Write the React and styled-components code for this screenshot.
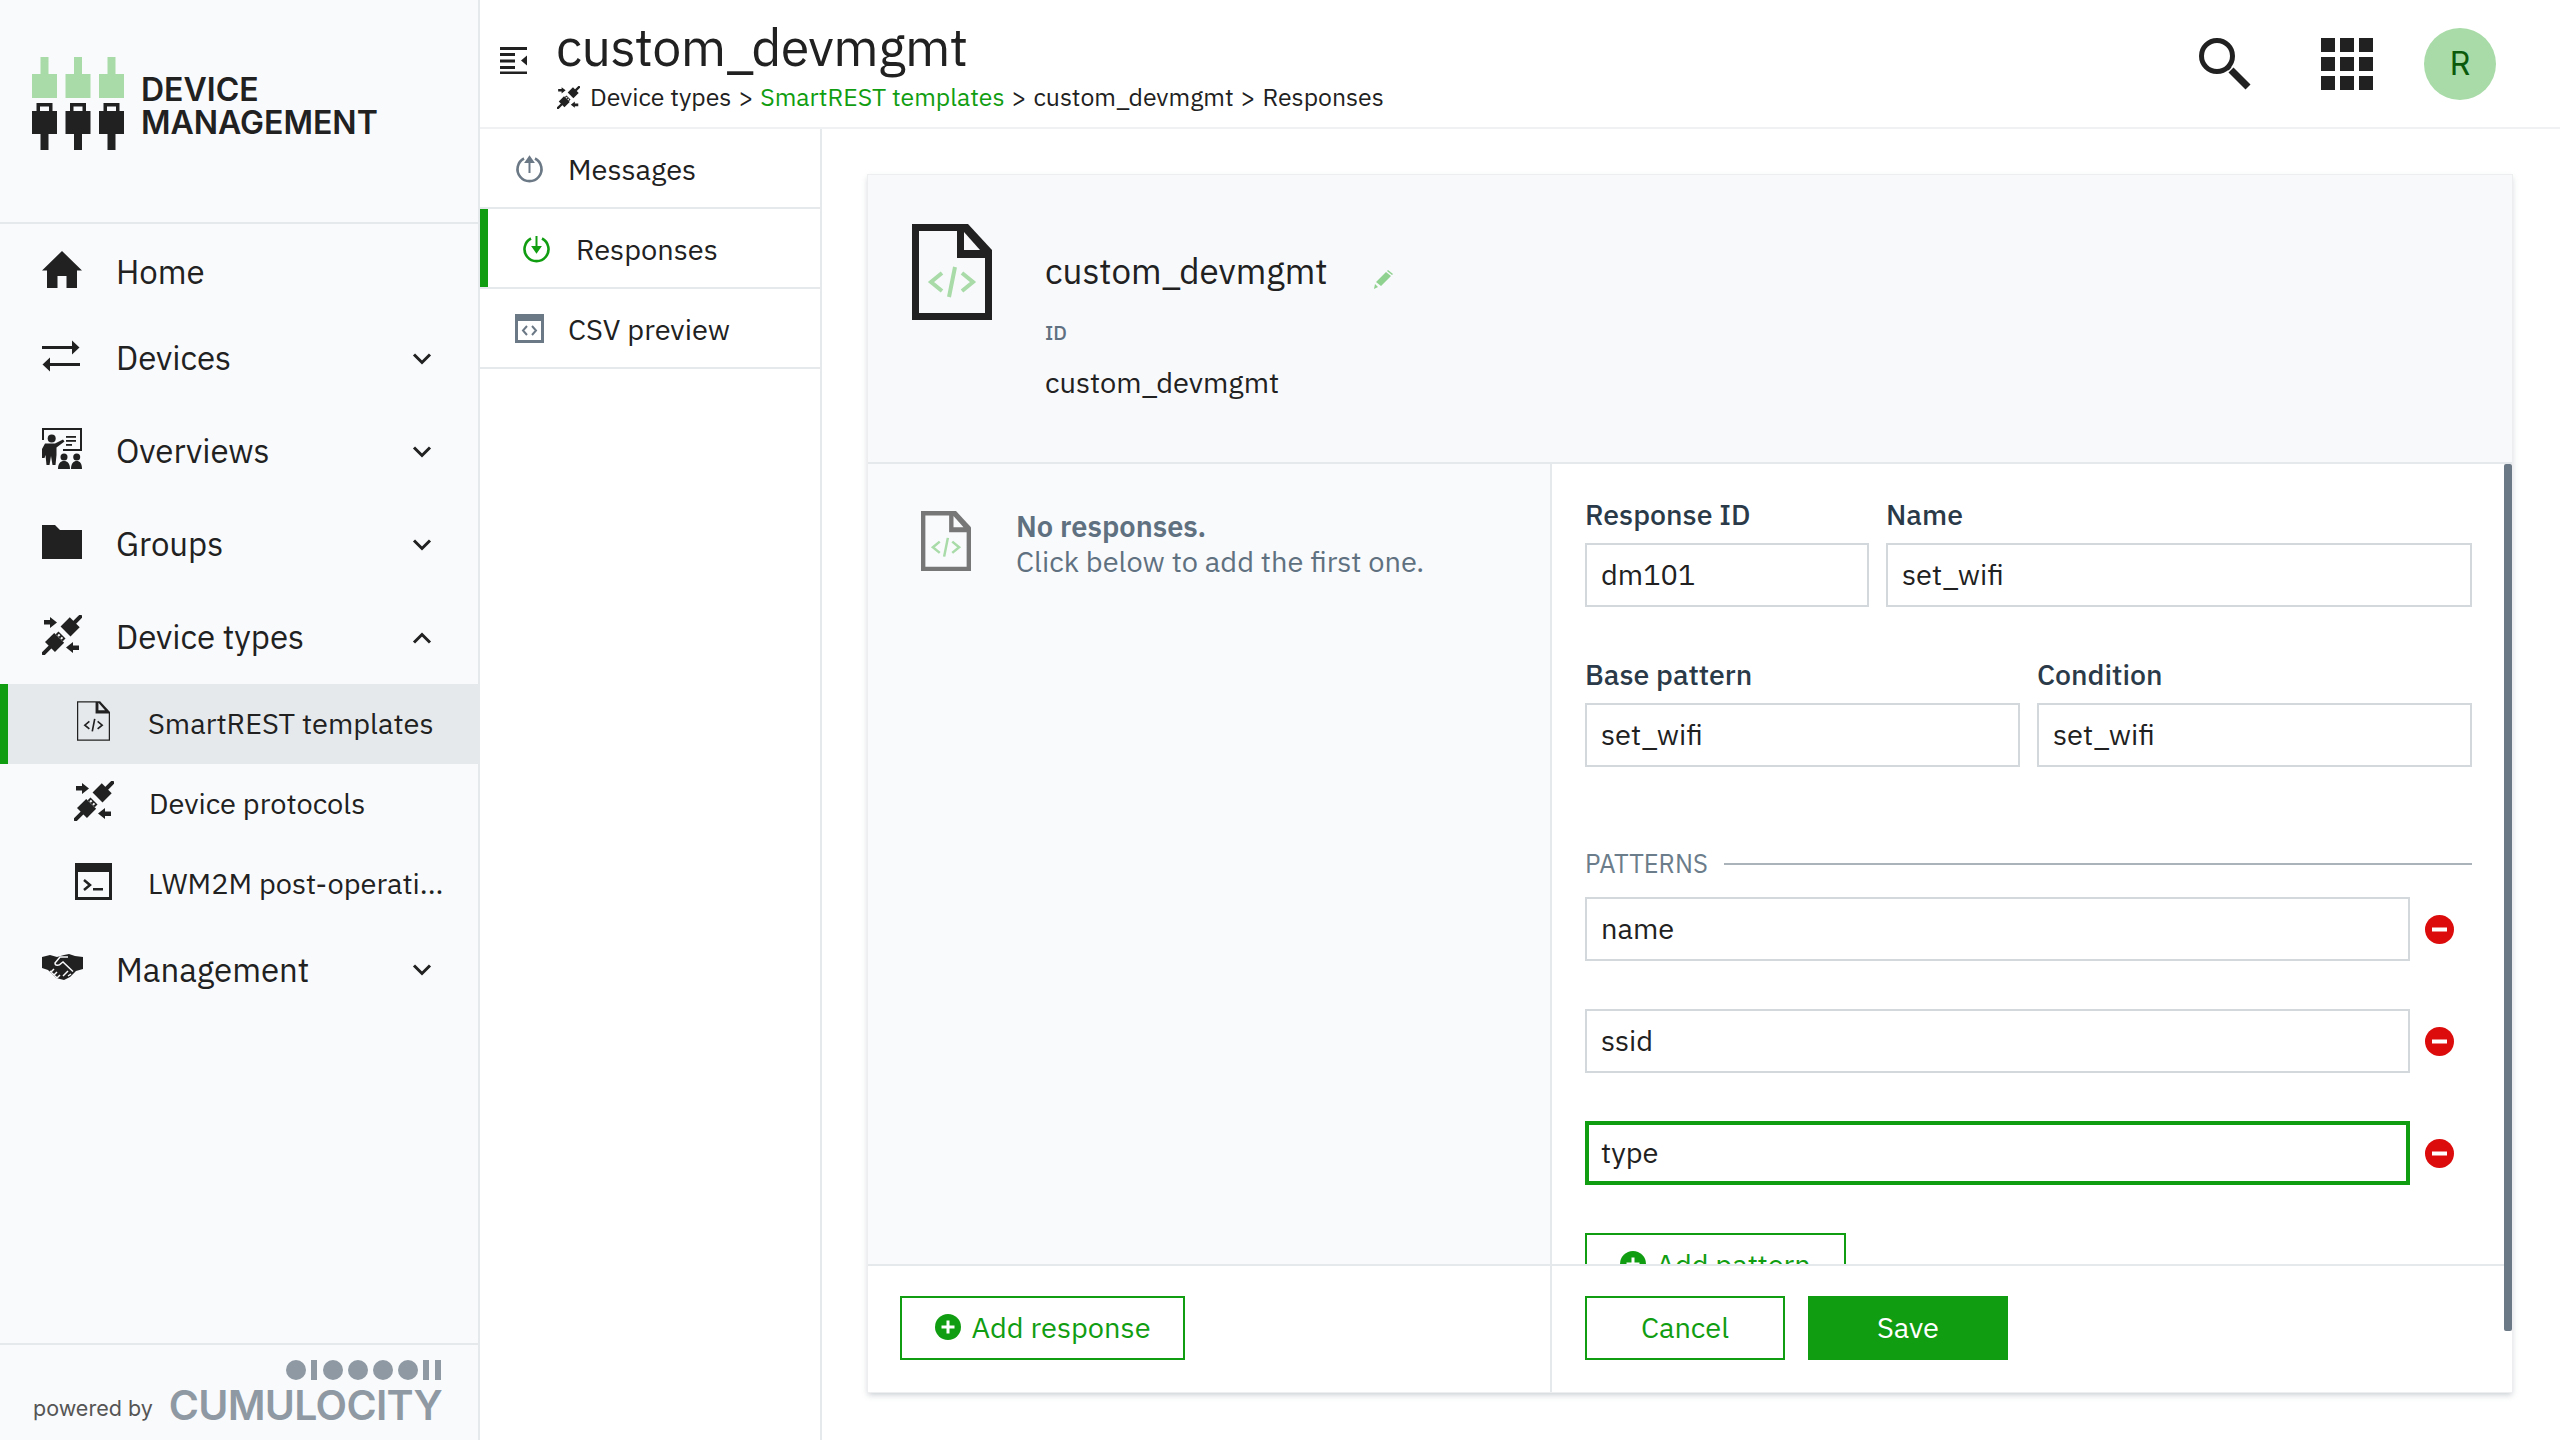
import React from "react";
import styled, { createGlobalStyle } from "styled-components";

const FONT = `"IBM Plex Sans", "Open Sans", "Noto Sans", sans-serif`;
const GREEN = "#119d11";
const INK = "#212121";
const LINE = "#e6e9ec";

const Global = createGlobalStyle`
  html, body { margin: 0; padding: 0; background: #fff; }
  body { font-family: ${FONT}; color: ${INK}; overflow: hidden; }
  * { box-sizing: border-box; }
`;

const Page = styled.div`
  display: flex;
  width: 2560px;
  height: 1440px;
  overflow: hidden;
`;

/* ---------- sidebar ---------- */
const Sidebar = styled.aside`
  flex: 0 0 480px;
  display: flex;
  flex-direction: column;
  background: #f9fafc;
  border-right: 2px solid ${LINE};
`;
const Brand = styled.div`
  flex: 0 0 224px;
  display: flex;
  align-items: flex-start;
  padding: 57px 0 0 32px;
  border-bottom: 2px solid ${LINE};
`;
const BrandName = styled.div`
  margin: 17px 0 0 16px;
  font: 600 32px/32.5px Inter, sans-serif;
  color: ${INK};
`;
const Nav = styled.nav`
  flex: 1;
  padding-top: 8px;
`;
const NavRow = styled.div`
  display: flex;
  align-items: center;
  height: ${(p) => p.$h || 93}px;
  padding: 0 46px 0 42px;
  font: 400 33px/40px ${FONT};
  color: ${INK};
`;
const NavIcon = styled.span`
  flex: 0 0 74px;
  display: flex;
  margin-top: -6px;
`;
const NavLabel = styled.span`
  flex: 1;
  margin-top: -1px;
`;
const SubRow = styled.div`
  display: flex;
  align-items: center;
  height: 80px;
  padding-left: 74px;
  font: 400 29px/36px ${FONT};
  background: ${(p) => (p.$active ? "#e6e9ec" : "transparent")};
  box-shadow: ${(p) => (p.$active ? `inset 8px 0 0 ${GREEN}` : "none")};
`;
const SubIcon = styled.span`
  flex: 0 0 74px;
  display: flex;
  justify-content: center;
  padding-right: 36px;
  margin-top: -6px;
`;
const SubLabel = styled.span`
  margin: -3px 0 0 ${(p) => p.$shift || 0}px;
`;
const SideFoot = styled.div`
  flex: 0 0 97px;
  display: flex;
  align-items: flex-end;
  justify-content: space-between;
  padding: 0 36px 20px 33px;
  border-top: 2px solid ${LINE};
`;
const Powered = styled.span`
  margin-bottom: -1px;
  font: 400 21.500px/26px Inter, sans-serif;
  color: #555;
`;
const CumuBlock = styled.div`
  display: flex;
  flex-direction: column;
  align-items: flex-end;
  gap: 10px;
`;
const CumuWord = styled.span`
  font: 600 41px/30px Inter, sans-serif;
  letter-spacing: -0.700px;
  color: #8e99a3;
`;

/* ---------- main ---------- */
const Main = styled.div`
  flex: 1;
  min-width: 0;
  display: flex;
  flex-direction: column;
`;
const Header = styled.header`
  flex: 0 0 129px;
  display: flex;
  align-items: flex-start;
  padding: 0 64px 0 20px;
  border-bottom: 2px solid #f0f1f2;
`;
const Toggle = styled.span`
  margin: 47px 30px 0 0;
  display: flex;
`;
const TitleBlock = styled.div`
  flex: 1;
  padding-top: 16px;
`;
const Title = styled.h1`
  margin: 0 0 0 -1px;
  font: 400 52px/62px ${FONT};
  letter-spacing: -0.600px;
  color: ${INK};
`;
const Crumbs = styled.div`
  display: flex;
  align-items: center;
  gap: 7px;
  margin-top: 2px;
  font: 400 24.800px/34px ${FONT};
  color: ${INK};
`;
const CrumbIcon = styled.span`
  display: flex;
  margin-right: 3px;
`;
const CrumbLink = styled.span`
  color: ${GREEN};
`;
const Tools = styled.div`
  display: flex;
  align-items: center;
  padding-top: 28px;
`;
const Avatar = styled.div`
  width: 72px;
  height: 72px;
  margin-left: 51px;
  border-radius: 50%;
  background: #a8dba8;
  color: #0b5a0b;
  display: flex;
  align-items: center;
  justify-content: center;
  font: 400 32px/1 Inter, sans-serif;
`;
const GridIcon = styled.div`
  margin-left: 70px;
  display: grid;
  grid-template-columns: repeat(3, 14px);
  grid-auto-rows: 14px;
  gap: 5px;
`;
const GridDot = styled.i`
  background: ${INK};
`;

const Content = styled.div`
  flex: 1;
  min-height: 0;
  display: flex;
`;
const SubMenu = styled.div`
  flex: 0 0 342px;
  border-right: 2px solid ${LINE};
`;
const SubMenuRow = styled.div`
  display: flex;
  align-items: center;
  height: 80px;
  padding-left: ${(p) => (p.$active ? 42 : 35)}px;
  gap: ${(p) => (p.$active ? 25 : 24)}px;
  border-bottom: 2px solid ${LINE};
  font: 400 29px/36px ${FONT};
  color: ${INK};
  box-shadow: ${(p) => (p.$active ? `inset 8px 0 0 ${GREEN}` : "none")};
`;
const RowLabel = styled.span`
  padding-top: 2px;
`;

const CardWrap = styled.div`
  flex: 1;
  min-width: 0;
  padding: 46px 48px 48px 46px;
`;
const Card = styled.section`
  position: relative;
  height: 100%;
  display: flex;
  flex-direction: column;
  background: #fff;
  box-shadow: 0 0 0 1px #eceef0, 0 3px 6px rgba(80, 95, 110, 0.3);
`;
const CardHead = styled.div`
  flex: 0 0 289px;
  display: flex;
  padding: 49px 0 0 44px;
  background: #f8f9fb;
  border-bottom: 2px solid ${LINE};
`;
const HeadText = styled.div`
  margin-left: 53px;
`;
const HeadTitle = styled.div`
  display: flex;
  align-items: center;
  margin-top: 23px;
  font: 400 35px/48px ${FONT};
`;
const Pencil = styled.span`
  display: flex;
  margin: 18px 0 0 45px;
`;
const HeadLabel = styled.div`
  margin-top: 24px;
  font: 500 20px/28px ${FONT};
  color: #5f7180;
`;
const HeadValue = styled.div`
  margin-top: 17px;
  font: 400 29px/36px ${FONT};
`;

const Split = styled.div`
  display: grid;
  grid-template-columns: 684px 1fr;
  flex: ${(p) => (p.$foot ? "0 0 128px" : "1")};
  min-height: 0;
  ${(p) => (p.$foot ? `border-top: 2px solid ${LINE};` : "")}
`;
const LeftPane = styled.div`
  display: flex;
  align-items: flex-start;
  padding: 47px 0 0 53px;
  background: #f9fafc;
  border-right: 2px solid ${LINE};
`;
const Empty = styled.div`
  margin: -2px 0 0 45px;
  font: 400 29px/35px ${FONT};
  color: #5f7180;
`;
const EmptyStrong = styled.div`
  font-weight: 600;
`;
const RightPane = styled.div`
  overflow: hidden;
  padding: 35px 40px 0 33px;
`;
const Thumb = styled.div`
  position: absolute;
  top: 289px;
  right: 0;
  width: 8px;
  height: 867px;
  background: #6b7885;
  border-radius: 2px;
`;
const FieldGrid = styled.div`
  display: grid;
  grid-template-columns: ${(p) => p.$cols};
  column-gap: 17px;
  margin-bottom: ${(p) => p.$after}px;
`;
const FieldLabel = styled.label`
  display: block;
  margin-bottom: 12px;
  font: 500 28.500px/32px ${FONT};
  color: #2b3a48;
`;
const TextInput = styled.input`
  display: block;
  width: 100%;
  height: 64px;
  padding: 0 14px 3px;
  border: ${(p) => (p.$focus ? `4px solid ${GREEN}` : "2px solid #d3d8dc")};
  ${(p) => (p.$focus ? "padding-left: 12px; padding-bottom: 3px;" : "")}
  outline: none;
  background: #fff;
  font: 400 29px/36px ${FONT};
  color: ${INK};
  border-radius: 0;
`;
const PatternsHead = styled.div`
  display: flex;
  align-items: center;
  gap: 16px;
  height: 32px;
  margin-bottom: 17px;
  font: 400 25.500px/32px ${FONT};
  color: #6b7c8a;
`;
const Rule = styled.span`
  flex: 1;
  height: 2px;
  background: #aab2ba;
`;
const PatternRow = styled.div`
  display: flex;
  align-items: center;
  margin-bottom: ${(p) => p.$after ?? 48}px;
`;
const RemoveBtn = styled.span`
  flex: 0 0 62px;
  display: flex;
  justify-content: center;
  padding-right: 3px;
`;
const Button = styled.button`
  display: inline-flex;
  align-items: center;
  justify-content: center;
  gap: 10px;
  height: 64px;
  width: ${(p) => p.$w}px;
  padding: 0 0 2px ${(p) => p.$pl || 0}px;
  border: 2px solid ${GREEN};
  border-radius: 0;
  background: ${(p) => (p.$primary ? GREEN : "#fff")};
  color: ${(p) => (p.$primary ? "#fff" : GREEN)};
  font: 400 29px/36px ${FONT};
  flex: none;
`;
const FootCell = styled.div`
  display: flex;
  gap: 23px;
  padding: 30px 0 0 ${(p) => p.$pl}px;
  ${(p) => (p.$border ? `border-right: 2px solid ${LINE};` : "")}
`;

/* ---------- icons ---------- */
const Chevron = ({ up }) => (
  <svg width="20" height="12" viewBox="0 0 20 12" fill="none">
    <path d={up ? "M2 10.500 10 2.500l8 8" : "M2 1.500 10 9.500l8-8"} stroke={INK} strokeWidth="3" />
  </svg>
);
const HomeIcon = () => (
  <svg width="40" height="37" viewBox="0 0 40 37" fill={INK}>
    <path d="M20 0 40 19.500h-5V37H24.500V25h-9v12H5V19.500H0z" />
  </svg>
);
const SwapIcon = () => (
  <svg width="38" height="32" viewBox="0 0 38 32" fill={INK}>
    <rect x="0" y="6" width="32" height="3" />
    <path d="M30 0.500 37.500 7.500 30 14.500z" />
    <rect x="6" y="23" width="32" height="3" />
    <path d="M8 17.500 0.500 24.500 8 31.500z" />
  </svg>
);
const OverviewIcon = () => (
  <svg width="40" height="41" viewBox="0 0 40 41" fill={INK}>
    <path d="M0 0h40v23H21v-2h17V2H2v10H0z" />
    <circle cx="9.700" cy="10.500" r="4" />
    <path d="M3 15.500h10l8-4 1.500 2-8 6V27l-1 10h-3l-1.500-9-1.500 9h-3l-1-10-1 3H0v-9z" />
    <rect x="24" y="8" width="10" height="1.800" />
    <rect x="24" y="12" width="10" height="1.800" />
    <rect x="24" y="16" width="6" height="1.800" />
    <circle cx="22" cy="29" r="3.500" />
    <path d="M16 41c0-5.500 2.500-8 6-8s6 2.500 6 8z" />
    <circle cx="34.700" cy="29" r="3.500" />
    <path d="M29 41c0-5.500 2.500-8 5.700-8s5.300 2.500 5.300 8z" />
  </svg>
);
const FolderIcon = () => (
  <svg width="40" height="34" viewBox="0 0 40 34" fill={INK}>
    <path d="M0 0h13l5 5h22v29H0z" />
  </svg>
);
const PlugIcon = ({ size = 40, color = INK, bg = "#f9fafc" }) => (
  <svg width={size} height={size} viewBox="0 0 40 40" fill={color}>
    <path d="M2 5h6V2l7 5.500L8 13V9.500H2z" />
    <path d="M37 35h-6v3l-7-5.500L31 27v3.500h6z" />
    <g transform="rotate(-45 20 20)">
      <rect x="-8" y="18" width="12" height="4" />
      <rect x="3" y="13" width="13" height="14" />
      <rect x="16" y="15" width="4" height="10" />
      <rect x="16.500" y="17" width="2.200" height="2" fill={bg} />
      <rect x="16.500" y="21" width="2.200" height="2" fill={bg} />
      <rect x="25" y="13" width="13" height="14" />
      <rect x="37" y="18" width="11" height="4" />
    </g>
  </svg>
);
const DocCode = ({ w, h, frame = INK, code = "#a8dba8", sw = 7, cs = 4, fold = "#f8f9fb" }) => (
  <svg width={w} height={h} viewBox="0 0 80 96">
    <path d="M0 0h56l24 26v70H0z" fill={frame} />
    <path d={`M${sw} ${sw}H45V${sw + 27}h${35 - sw}V${96 - sw}H${sw}z`} fill={fold} />
    <path d={`M52 ${sw + 1}l16 18H52z`} fill={fold} />
    <path d="M30 49 19 58l11 9M50 49l11 9-11 9M43 43l-6 30" fill="none" stroke={code} strokeWidth={cs} />
  </svg>
);
const TerminalIcon = () => (
  <svg width="37" height="37" viewBox="0 0 37 37" fill={INK}>
    <path fillRule="evenodd" d="M0 0h37v37H0zM3 9v25h31V9z" />
    <path d="M9 17l6 5-6 5" fill="none" stroke={INK} strokeWidth="2.500" />
    <rect x="18" y="25" width="10" height="2.500" />
  </svg>
);
const ShakeIcon = () => (
  <svg width="41" height="27" viewBox="0 0 41 27">
    <path fill={INK} d="M0 3 8 1l7 2 7-2 5-1 6 2 8 1v12l-7 2-6 6-6 3-8-2-8-8-6-2z" />
    <path
      fill="none"
      stroke="#f9fafc"
      strokeWidth="1.500"
      d="M26 3h-8l-5 6c0 3 4 3 6 .5l2-1.500 10 9.500M8 17l7 7M12 15l-3 3M15 18l-3 3M18 21l-3 3M26 17l-5 5M29 20l-3 2"
    />
  </svg>
);
const SearchIcon = () => (
  <svg width="52" height="52" viewBox="0 0 52 52" fill="none">
    <circle cx="18" cy="18" r="15.500" stroke={INK} strokeWidth="5" />
    <path d="M29 29l2 2" stroke={INK} strokeWidth="4" />
    <path d="M32 32 49 49" stroke={INK} strokeWidth="7" />
  </svg>
);
const ToggleIcon = () => (
  <svg width="27" height="27" viewBox="0 0 27 27" fill={INK}>
    <rect width="27" height="3" />
    <rect y="6" width="15" height="3" />
    <rect y="12.500" width="15" height="3" />
    <rect y="19" width="15" height="3" />
    <rect y="24.500" width="27" height="2.500" />
    <path d="M27 8.500V18.500l-6-5z" />
  </svg>
);
const CircleArrow = ({ up, color, size = 29 }) => (
  <svg width={size} height={size} viewBox="0 0 29 29" fill="none">
    <path d="M9 4.500a12 12 0 1 0 11 0" stroke={color} strokeWidth="2.600" />
    {up ? (
      <path d="M14.500 19V3M11 8l3.500-5L18 8z" stroke={color} strokeWidth="2" fill={color} />
    ) : (
      <path d="M14.500 2v14M11 13l3.500 5 3.500-5z" stroke={color} strokeWidth="2" fill={color} />
    )}
  </svg>
);
const CsvIcon = () => (
  <svg width="29" height="29" viewBox="0 0 29 29">
    <path fillRule="evenodd" fill="#6b7885" d="M0 0h29v29H0zM3 7v19h23V7z" />
    <path d="M12 12l-4 4.500 4 4.500M17 12l4 4.500-4 4.500" fill="none" stroke="#6b7885" strokeWidth="2" />
  </svg>
);
const PencilIcon = () => (
  <svg width="20" height="20" viewBox="0 0 20 20" fill="#8fd18f">
    <path d="M13 2l5 4L8 16l-5-4zM15 0l5 4-1 1-5-4z" />
    <path d="M2 14l3 3-4 2z" />
  </svg>
);
const MinusCircle = () => (
  <svg width="29" height="29" viewBox="0 0 29 29">
    <circle cx="14.500" cy="14.500" r="14.500" fill="#dc0c0c" />
    <rect x="7" y="12.500" width="15" height="4" fill="#fff" />
  </svg>
);
const PlusCircle = () => (
  <svg width="26" height="26" viewBox="0 0 26 26">
    <circle cx="13" cy="13" r="13" fill={GREEN} />
    <path d="M13 6.500v13M6.500 13h13" stroke="#fff" strokeWidth="3" />
  </svg>
);
const BrandMark = () => (
  <svg width="93" height="93" viewBox="0 0 93 93">
    {[0, 33.500, 67].map((x) => (
      <g key={x} transform={`translate(${x} 0)`}>
        <path d="M8.500 0h8v17H25v24H0V17h8.500z" fill="#a8dba8" />
        <path
          fillRule="evenodd"
          d="M4.500 46h16v8H25v23h-8.500v16h-8V77H0V54h4.500zM8 49.500V54h9v-4.500z"
          fill={INK}
        />
      </g>
    ))}
  </svg>
);
const CumuDots = () => (
  <svg width="156" height="20" viewBox="0 0 156 20" fill="#8e99a3">
    <circle cx="10" cy="10" r="10" />
    <rect x="25" width="6" height="20" />
    <circle cx="47" cy="10" r="10" />
    <circle cx="72" cy="10" r="10" />
    <circle cx="97" cy="10" r="10" />
    <circle cx="122" cy="10" r="10" />
    <rect x="137" width="6" height="20" />
    <rect x="149" width="6" height="20" />
  </svg>
);

export default function App() {
  return (
    <Page>
      <Global />
      <Sidebar>
        <Brand>
          <BrandMark />
          <BrandName>
            DEVICE
            <br />
            MANAGEMENT
          </BrandName>
        </Brand>
        <Nav>
          <NavRow $h={80}>
            <NavIcon><HomeIcon /></NavIcon>
            <NavLabel>Home</NavLabel>
          </NavRow>
          <NavRow>
            <NavIcon><SwapIcon /></NavIcon>
            <NavLabel>Devices</NavLabel>
            <Chevron />
          </NavRow>
          <NavRow>
            <NavIcon><OverviewIcon /></NavIcon>
            <NavLabel>Overviews</NavLabel>
            <Chevron />
          </NavRow>
          <NavRow>
            <NavIcon><FolderIcon /></NavIcon>
            <NavLabel>Groups</NavLabel>
            <Chevron />
          </NavRow>
          <NavRow>
            <NavIcon><PlugIcon /></NavIcon>
            <NavLabel>Device types</NavLabel>
            <Chevron up />
          </NavRow>
          <SubRow $active>
            <SubIcon><DocCode w={33} h={40} sw={3} cs={4} fold="#e6e9ec" code={INK} /></SubIcon>
            <SubLabel>SmartREST templates</SubLabel>
          </SubRow>
          <SubRow>
            <SubIcon><PlugIcon /></SubIcon>
            <SubLabel $shift={-1}>Device protocols</SubLabel>
          </SubRow>
          <SubRow>
            <SubIcon><TerminalIcon /></SubIcon>
            <SubLabel>LWM2M post-operati...</SubLabel>
          </SubRow>
          <NavRow $h={92}>
            <NavIcon><ShakeIcon /></NavIcon>
            <NavLabel>Management</NavLabel>
            <Chevron />
          </NavRow>
        </Nav>
        <SideFoot>
          <Powered>powered by</Powered>
          <CumuBlock>
            <CumuDots />
            <CumuWord>CUMULOCITY</CumuWord>
          </CumuBlock>
        </SideFoot>
      </Sidebar>

      <Main>
        <Header>
          <Toggle><ToggleIcon /></Toggle>
          <TitleBlock>
            <Title>custom_devmgmt</Title>
            <Crumbs>
              <CrumbIcon><PlugIcon size={23} bg="#fff" /></CrumbIcon>
              <span>Device types</span>
              <span>&gt;</span>
              <CrumbLink>SmartREST templates</CrumbLink>
              <span>&gt;</span>
              <span>custom_devmgmt</span>
              <span>&gt;</span>
              <span>Responses</span>
            </Crumbs>
          </TitleBlock>
          <Tools>
            <SearchIcon />
            <GridIcon>
              {Array.from({ length: 9 }).map((_, i) => (
                <GridDot key={i} />
              ))}
            </GridIcon>
            <Avatar>R</Avatar>
          </Tools>
        </Header>
        <Content>
          <SubMenu>
            <SubMenuRow>
              <CircleArrow up color="#6b7885" />
              <RowLabel>Messages</RowLabel>
            </SubMenuRow>
            <SubMenuRow $active>
              <CircleArrow color={GREEN} />
              <RowLabel>Responses</RowLabel>
            </SubMenuRow>
            <SubMenuRow>
              <CsvIcon />
              <RowLabel>CSV preview</RowLabel>
            </SubMenuRow>
          </SubMenu>
          <CardWrap>
            <Card>
              <CardHead>
                <DocCode w={80} h={96} />
                <HeadText>
                  <HeadTitle>
                    custom_devmgmt
                    <Pencil><PencilIcon /></Pencil>
                  </HeadTitle>
                  <HeadLabel>ID</HeadLabel>
                  <HeadValue>custom_devmgmt</HeadValue>
                </HeadText>
              </CardHead>
              <Split>
                <LeftPane>
                  <DocCode w={50} h={60} frame="#777" sw={7} cs={4} fold="#f9fafc" />
                  <Empty>
                    <EmptyStrong>No responses.</EmptyStrong>
                    Click below to add the first one.
                  </Empty>
                </LeftPane>
                <RightPane>
                  <FieldGrid $cols="284px 1fr" $after={52}>
                    <div>
                      <FieldLabel>Response ID</FieldLabel>
                      <TextInput readOnly value="dm101" />
                    </div>
                    <div>
                      <FieldLabel>Name</FieldLabel>
                      <TextInput readOnly value="set_wifi" />
                    </div>
                  </FieldGrid>
                  <FieldGrid $cols="1fr 1fr" $after={81}>
                    <div>
                      <FieldLabel>Base pattern</FieldLabel>
                      <TextInput readOnly value="set_wifi" />
                    </div>
                    <div>
                      <FieldLabel>Condition</FieldLabel>
                      <TextInput readOnly value="set_wifi" />
                    </div>
                  </FieldGrid>
                  <PatternsHead>
                    PATTERNS
                    <Rule />
                  </PatternsHead>
                  <PatternRow>
                    <TextInput readOnly value="name" />
                    <RemoveBtn><MinusCircle /></RemoveBtn>
                  </PatternRow>
                  <PatternRow>
                    <TextInput readOnly value="ssid" />
                    <RemoveBtn><MinusCircle /></RemoveBtn>
                  </PatternRow>
                  <PatternRow>
                    <TextInput readOnly $focus value="type" />
                    <RemoveBtn><MinusCircle /></RemoveBtn>
                  </PatternRow>
                  <Button $w={261}>
                    <PlusCircle />
                    Add pattern
                  </Button>
                </RightPane>
              </Split>
              <Split $foot>
                <FootCell $pl={32} $border>
                  <Button $w={285} $pl={1}>
                    <PlusCircle />
                    Add response
                  </Button>
                </FootCell>
                <FootCell $pl={33}>
                  <Button $w={200}>Cancel</Button>
                  <Button $w={200} $primary>Save</Button>
                </FootCell>
              </Split>
              <Thumb />
            </Card>
          </CardWrap>
        </Content>
      </Main>
    </Page>
  );
}
